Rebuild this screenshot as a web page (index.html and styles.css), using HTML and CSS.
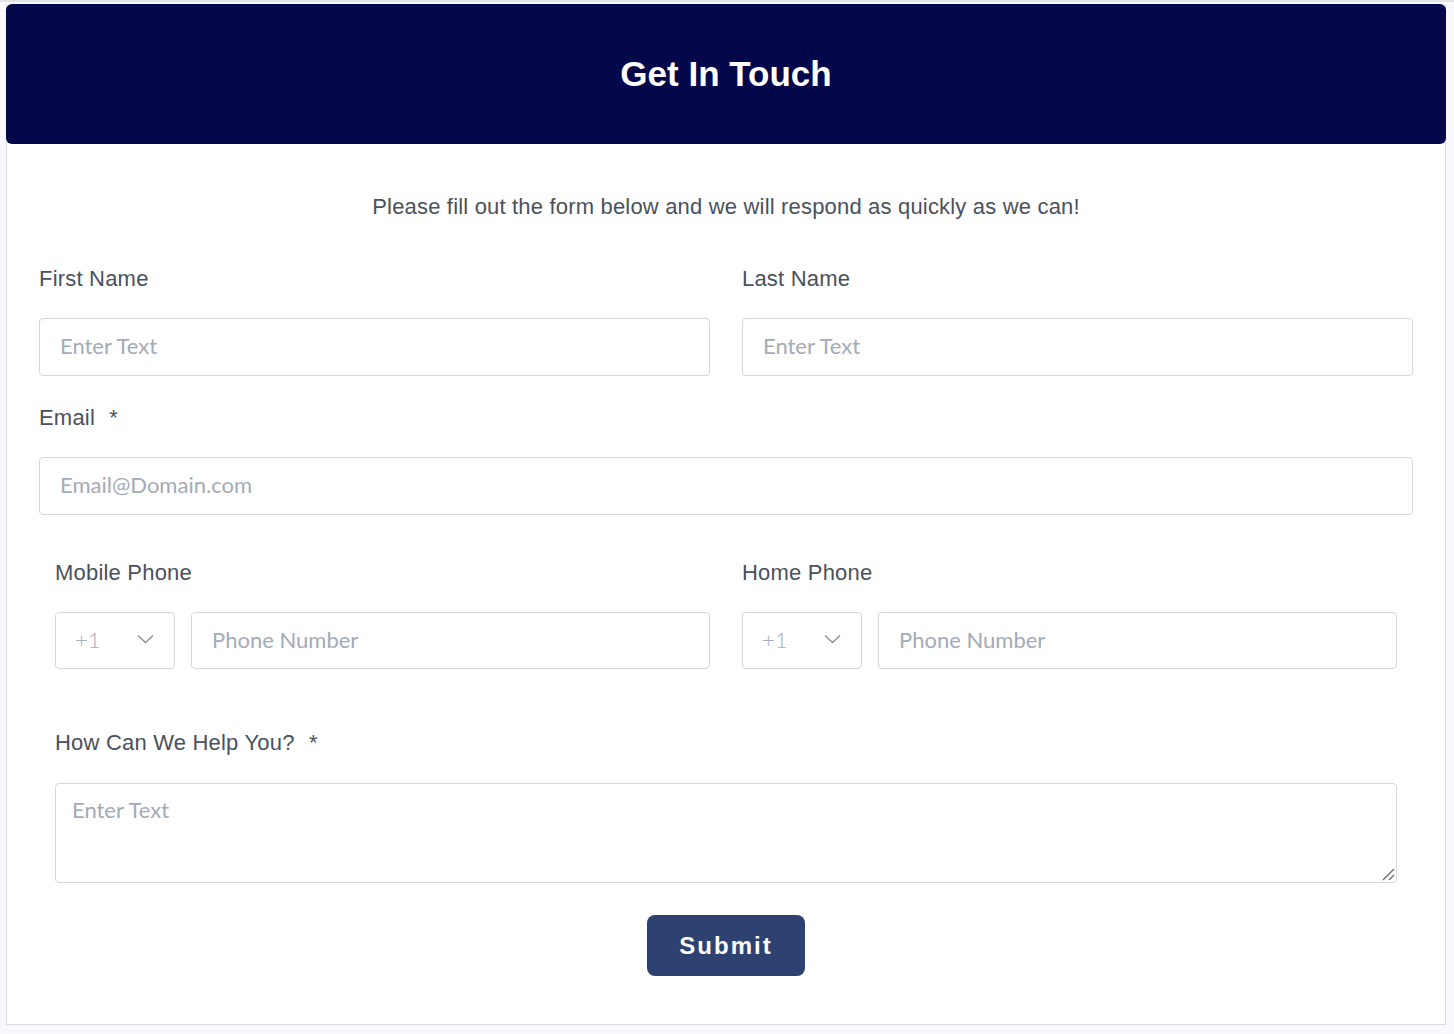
FILE: index.html
```html
<!DOCTYPE html>
<html lang="en">
<head>
  <meta charset="UTF-8">
  <title>Get In Touch</title>
  <link rel="stylesheet" href="styles.css">
</head>
<body>

  <div class="card">
    <header class="card-header">
      <h1>Get In Touch</h1>
    </header>

    <form class="card-body">
      <p class="intro">Please fill out the form below and we will respond as quickly as we can!</p>

      <div class="row">
        <div class="field">
          <label for="first">First Name</label>
          <input id="first" type="text" placeholder="Enter Text">
        </div>
        <div class="field">
          <label for="last">Last Name</label>
          <input id="last" type="text" placeholder="Enter Text">
        </div>
      </div>

      <div class="field">
        <label for="email">Email <span class="req">*</span></label>
        <input id="email" type="email" placeholder="Email@Domain.com">
      </div>

      <div class="indent">
        <div class="row phones">
          <div class="field">
            <label for="mobile">Mobile Phone</label>
            <div class="phone">
              <div class="code">
                <span>+1</span>
                <svg width="17" height="10" viewBox="0 0 17 10"><path d="M1 1.5l7.5 7 7.5-7" fill="none" stroke="#8b919a" stroke-width="1.5"/></svg>
              </div>
              <input id="mobile" type="tel" placeholder="Phone Number">
            </div>
          </div>
          <div class="field">
            <label for="home">Home Phone</label>
            <div class="phone">
              <div class="code">
                <span>+1</span>
                <svg width="17" height="10" viewBox="0 0 17 10"><path d="M1 1.5l7.5 7 7.5-7" fill="none" stroke="#8b919a" stroke-width="1.5"/></svg>
              </div>
              <input id="home" type="tel" placeholder="Phone Number">
            </div>
          </div>
        </div>

        <div class="field help">
          <label for="help">How Can We Help You? <span class="req">*</span></label>
          <div class="area">
            <textarea id="help" placeholder="Enter Text"></textarea>
            <svg class="grip" width="14" height="14" viewBox="0 0 14 14"><path d="M13 2L2 13M13 8L8 13" fill="none" stroke="#6b6e73" stroke-width="1.4"/></svg>
          </div>
        </div>
      </div>

      <div class="actions">
        <button type="button" class="submit">Submit</button>
      </div>
    </form>
  </div>

</body>
</html>
```

FILE: styles.css
```css
body {
  margin: 0;
  padding: 2px 8px 0 6px;
  background: #f8f9fe;
  border-top: 2px solid #e3e4e6;
  font-family: 'Liberation Sans', Arial, sans-serif;
  color: #4a515c;
}

.card {
  background: #fff;
  border: 1px solid #d9dce1;
  border-top: none;
}

.card-header {
  background: #04084a;
  border-radius: 6px;
  margin: 0 -1px;
  height: 140px;
  display: flex;
  align-items: center;
  justify-content: center;
}

.card-header h1 {
  margin: 0;
  color: #fff;
  font-size: 35px;
  font-weight: bold;
}

.card-body {
  padding: 51px 32px 48px;
}

.intro {
  margin: 0 0 47px;
  text-align: center;
  font-size: 22px;
  letter-spacing: 0.18px;
  line-height: 24px;
}

.row {
  display: grid;
  grid-template-columns: 1fr 1fr;
  gap: 32px;
}

.field {
  margin-bottom: 29px;
}

.field label {
  display: block;
  font-size: 22px;
  letter-spacing: 0.2px;
  line-height: 26px;
  margin-bottom: 26px;
}

.req {
  margin-left: 8px;
}

input,
textarea,
.code {
  box-sizing: border-box;
  width: 100%;
  height: 58px;
  border: 1px solid #d3d6db;
  border-radius: 4px;
  padding: 0 20px 3px;
  font-family: Lato, sans-serif;
  font-size: 22px;
  color: #4a515c;
  background: #fff;
  outline: none;
}

input::placeholder,
textarea::placeholder {
  color: #a3abb6;
}

.indent {
  padding: 16px 16px 0;
}

.phones .field {
  margin-bottom: 61px;
}

.phone {
  display: flex;
  gap: 16px;
}

.phone input {
  height: 57px;
}

.code {
  flex: none;
  width: 120px;
  height: 57px;
  display: flex;
  align-items: center;
  justify-content: space-between;
  padding-left: 19px;
  color: #a3abb6;
  font-weight: 300;
}

.help {
  margin-bottom: 32px;
}

.help label {
  margin-bottom: 27px;
}

.area {
  position: relative;
}

textarea {
  display: block;
  height: 100px;
  padding: 12px 16px;
  resize: none;
}

.grip {
  position: absolute;
  right: 2px;
  bottom: 2px;
}

.actions {
  display: flex;
  justify-content: center;
}

.submit {
  width: 158px;
  height: 61px;
  border: none;
  border-radius: 8px;
  background: #2e4272;
  color: #fff;
  font-family: 'Liberation Sans', Arial, sans-serif;
  font-size: 24px;
  font-weight: bold;
  letter-spacing: 2px;
  cursor: pointer;
}
```
